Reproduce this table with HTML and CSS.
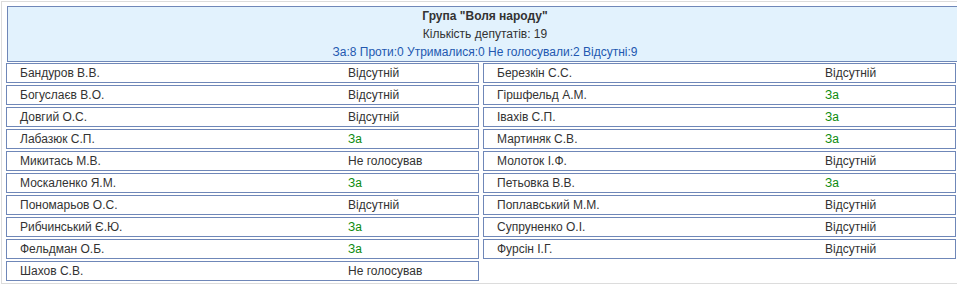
FILE: index.html
```html
<!DOCTYPE html>
<html lang="uk">
<head>
<meta charset="utf-8">
<title>Група "Воля народу"</title>
<link rel="stylesheet" href="styles.css">
</head>
<body>
<div class="panel">
  <div class="head">
    <div class="title">Група "Воля народу"</div>
    <div class="count">Кількість депутатів: 19</div>
    <div class="summary">За:8 Проти:0 Утрималися:0 Не голосували:2 Відсутні:9</div>
  </div>
  <div class="grid">
    <div class="col">
      <div class="row"><span class="name">Бандуров В.В.</span><span class="vote">Відсутній</span></div>
      <div class="row"><span class="name">Богуслаєв В.О.</span><span class="vote">Відсутній</span></div>
      <div class="row"><span class="name">Довгий О.С.</span><span class="vote">Відсутній</span></div>
      <div class="row"><span class="name">Лабазюк С.П.</span><span class="vote yes">За</span></div>
      <div class="row"><span class="name">Микитась М.В.</span><span class="vote">Не голосував</span></div>
      <div class="row"><span class="name">Москаленко Я.М.</span><span class="vote yes">За</span></div>
      <div class="row"><span class="name">Пономарьов О.С.</span><span class="vote">Відсутній</span></div>
      <div class="row"><span class="name">Рибчинський Є.Ю.</span><span class="vote yes">За</span></div>
      <div class="row"><span class="name">Фельдман О.Б.</span><span class="vote yes">За</span></div>
      <div class="row"><span class="name">Шахов С.В.</span><span class="vote">Не голосував</span></div>
    </div>
    <div class="col">
      <div class="row"><span class="name">Березкін С.С.</span><span class="vote">Відсутній</span></div>
      <div class="row"><span class="name">Гіршфельд А.М.</span><span class="vote yes">За</span></div>
      <div class="row"><span class="name">Івахів С.П.</span><span class="vote yes">За</span></div>
      <div class="row"><span class="name">Мартиняк С.В.</span><span class="vote yes">За</span></div>
      <div class="row"><span class="name">Молоток І.Ф.</span><span class="vote">Відсутній</span></div>
      <div class="row"><span class="name">Петьовка В.В.</span><span class="vote yes">За</span></div>
      <div class="row"><span class="name">Поплавський М.М.</span><span class="vote">Відсутній</span></div>
      <div class="row"><span class="name">Супруненко О.І.</span><span class="vote">Відсутній</span></div>
      <div class="row"><span class="name">Фурсін І.Г.</span><span class="vote">Відсутній</span></div>
    </div>
  </div>
</div>
</body>
</html>
```

FILE: styles.css
```css
html {
  overflow: hidden;
  background: #fff;
}
body {
  margin: 0;
  font-family: "Liberation Sans", Arial, sans-serif;
  font-size: 12px;
  color: #333;
}
.panel {
  margin: 1px 0 0 1px;
  width: 958px;
  border: 1px solid #dcdcdc;
  padding: 4px 4px 2px 4px;
  box-sizing: content-box;
}
.head {
  margin: 0 1px 1px 1px;
  height: 54px;
  border: 1px solid #6f87b8;
  background: #e2f2fd;
  text-align: center;
  line-height: 18px;
}
.title {
  font-weight: bold;
  color: #333;
}
.count {
  color: #333;
}
.summary {
  color: #2258b0;
}
.grid {
  display: grid;
  grid-template-columns: 473px 473px;
  column-gap: 4px;
  align-items: start;
}
.col {
  display: flex;
  flex-direction: column;
  gap: 2px;
}
.row {
  display: grid;
  grid-template-columns: 328px 1fr;
  height: 18px;
  line-height: 18px;
  border: 1px solid #6f87b8;
  padding-left: 13px;
}
.vote.yes {
  color: #0b8a0b;
}
```
